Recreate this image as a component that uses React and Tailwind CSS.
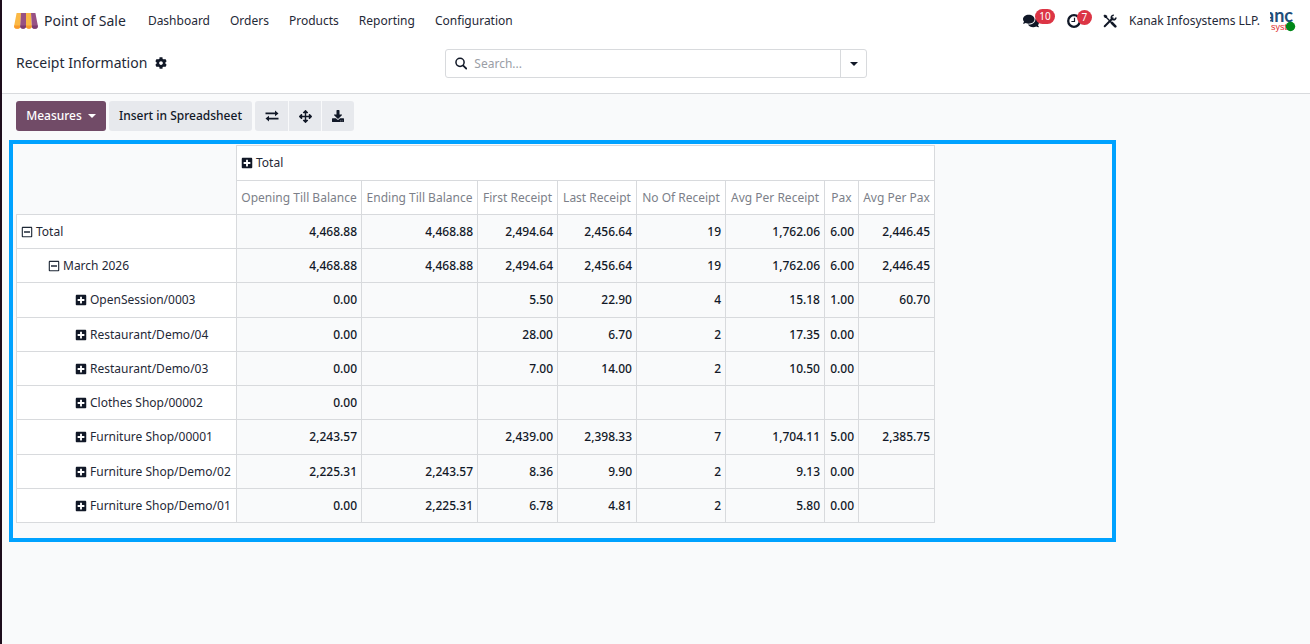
import { FaComments, FaCog, FaPlusSquare, FaRegMinusSquare, FaArrowsAlt, FaDownload } from "react-icons/fa";

const menu = ["Dashboard", "Orders", "Products", "Reporting", "Configuration"];

const columns = [
  { label: "Opening Till Balance", width: "w-[125px]" },
  { label: "Ending Till Balance", width: "w-[116px]" },
  { label: "First Receipt", width: "w-[80px]" },
  { label: "Last Receipt", width: "w-[79px]" },
  { label: "No Of Receipt", width: "w-[89px]" },
  { label: "Avg Per Receipt", width: "w-[99px]" },
  { label: "Pax", width: "w-[34px]" },
  { label: "Avg Per Pax", width: "w-[76px]" },
];

const rows = [
  { label: "Total", level: 0, values: ["4,468.88", "4,468.88", "2,494.64", "2,456.64", "19", "1,762.06", "6.00", "2,446.45"] },
  { label: "March 2026", level: 1, values: ["4,468.88", "4,468.88", "2,494.64", "2,456.64", "19", "1,762.06", "6.00", "2,446.45"] },
  { label: "OpenSession/0003", level: 2, values: ["0.00", "", "5.50", "22.90", "4", "15.18", "1.00", "60.70"] },
  { label: "Restaurant/Demo/04", level: 2, values: ["0.00", "", "28.00", "6.70", "2", "17.35", "0.00", ""] },
  { label: "Restaurant/Demo/03", level: 2, values: ["0.00", "", "7.00", "14.00", "2", "10.50", "0.00", ""] },
  { label: "Clothes Shop/00002", level: 2, values: ["0.00", "", "", "", "", "", "", ""] },
  { label: "Furniture Shop/00001", level: 2, values: ["2,243.57", "", "2,439.00", "2,398.33", "7", "1,704.11", "5.00", "2,385.75"] },
  { label: "Furniture Shop/Demo/02", level: 2, values: ["2,225.31", "2,243.57", "8.36", "9.90", "2", "9.13", "0.00", ""] },
  { label: "Furniture Shop/Demo/01", level: 2, values: ["0.00", "2,225.31", "6.78", "4.81", "2", "5.80", "0.00", ""] },
];

const indents = ["pl-1", "pl-[31px]", "pl-[58px]"];

function AwningLogo() {
  return (
    <svg width="24" height="16" viewBox="0 0 24 16" aria-hidden="true">
      <path d="M2.6 0H7L6.4 13a3.1 2.8 0 0 1-6.3 0z" fill="#fbb945" />
      <path d="M7 0H12v13a2.9 2.8 0 0 1-5.8 0z" fill="#985184" />
      <path d="M12 0h5l.8 13a2.9 2.8 0 0 1-5.8 0z" fill="#fbb945" />
      <path d="M17 0h4.4l2.5 13a3 2.8 0 0 1-6.1 0z" fill="#985184" />
      <path d="M.1 12.6h6.2v.4a3.1 2.8 0 0 1-6.2 0zM12 12.6h5.8v.4a2.9 2.8 0 0 1-5.8 0z" fill="#f99a2c" />
      <path d="M6.2 12.6H12v.4a2.9 2.8 0 0 1-5.8 0zM17.8 12.6h6v.4a3 2.8 0 0 1-6 0z" fill="#7c3c70" />
    </svg>
  );
}

function ClockIcon() {
  return (
    <svg width="14" height="14" viewBox="0 0 14 14" fill="none" stroke="currentColor" aria-hidden="true">
      <circle cx="7" cy="7" r="5.8" strokeWidth="2.3" />
      <path d="M7.5 3.8V7.5H4.4" strokeWidth="1.2" />
    </svg>
  );
}

function ToolsIcon() {
  return (
    <svg width="14" height="14" viewBox="0 0 14 14" fill="none" stroke="currentColor" aria-hidden="true">
      <path d="m2.5 2.5 6 6.2" strokeWidth="1.3" />
      <path d="m9 9 3.3 3.4" strokeWidth="2.6" strokeLinecap="round" />
      <path d="m1.7 12.3 8-8" strokeWidth="2" strokeLinecap="round" />
      <path d="M10.8 1.2A2.3 2.3 0 1 0 12.9 3.5" strokeWidth="1.6" />
      <path d="M.4 1.8 1.8.4l2.4 1.4v1.3l-1 1H1.9z" fill="currentColor" stroke="none" />
    </svg>
  );
}

function SwapIcon() {
  return (
    <svg width="14" height="12" viewBox="0 0 14 12" fill="currentColor" aria-hidden="true">
      <path d="M.5 2.6H10V.6L13.5 3.4 10 6.2V4.2H.5z" />
      <path d="M13.5 7.8H4v-2L.5 8.6 4 11.4v-2h9.5z" />
    </svg>
  );
}

function SearchIcon() {
  return (
    <svg width="13" height="13" viewBox="0 0 13 13" fill="none" stroke="currentColor" aria-hidden="true">
      <circle cx="5.3" cy="5.3" r="4.3" strokeWidth="1.6" />
      <path d="m8.4 8.4 4 4" strokeWidth="1.9" />
    </svg>
  );
}

function Caret() {
  return (
    <svg width="8" height="4" viewBox="0 0 8 4" fill="currentColor" aria-hidden="true">
      <path d="M0 0h8L4 4z" />
    </svg>
  );
}

function Avatar() {
  return (
    <svg width="26" height="24" viewBox="0 0 26 24" role="img" aria-label="Kanak Infosystems">
      <text x="-5" y="13" fontSize="18" fontFamily="Lato, sans-serif" fontWeight="700" fill="#1f4e79">anc</text>
      <text x="1" y="21" fontSize="9" fontFamily="Liberation Sans, sans-serif" fill="#e0312f">syst</text>
      <circle cx="20.5" cy="17.5" r="4.7" fill="#008818" />
    </svg>
  );
}

export default function App() {
  return (
    <div className="min-h-screen border-l-2 border-[#1d0d1c] bg-[#f9fafb] font-['Noto_Sans',sans-serif] text-[12px] text-[#1f2937]">
      <header className="border-b border-[#d8dadd] bg-white">
        <nav className="flex h-[41px] items-center pl-3 pr-[14px]">
          <a href="#home" className="flex items-center gap-[6px] text-sm">
            <AwningLogo />
            Point of Sale
          </a>
          <div className="ml-[22px] flex items-center gap-5">
            {menu.map((item) => (
              <a key={item} href="#menu">{item}</a>
            ))}
          </div>
          <div className="ml-auto flex items-center text-[#111827]">
            <button aria-label="Messages" className="relative mr-7">
              <FaComments size={16} />
              <span className="absolute -top-1 left-3 flex h-[15px] w-5 items-center justify-center rounded-full bg-[#dc3545] text-[10px] text-white">10</span>
            </button>
            <button aria-label="Activities" className="relative mr-[22px]">
              <ClockIcon />
              <span className="absolute -top-1 left-[10px] flex size-[15px] items-center justify-center rounded-full bg-[#dc3545] text-[10px] text-white">7</span>
            </button>
            <button aria-label="Tools" className="mr-3"><ToolsIcon /></button>
            <button className="flex items-center gap-[10px] text-[#1f2937]">
              Kanak Infosystems LLP.
              <Avatar />
            </button>
          </div>
        </nav>
        <div className="grid h-[52px] grid-cols-[1fr_422px_1fr] items-start px-[14px] pt-2">
          <div className="flex h-7 items-center gap-2">
            <h1 className="text-sm">Receipt Information</h1>
            <button aria-label="Actions" className="text-[#111827]"><FaCog size={12} /></button>
          </div>
          <div className="flex h-[29px] rounded-[3px] border border-[#d8dadd]">
            <label className="flex flex-1 items-center gap-[7px] pl-[9px] text-[#111827]">
              <SearchIcon />
              <input type="search" aria-label="Search" placeholder="Search..." className="w-full outline-none placeholder:text-[#9a9ea6]" />
            </label>
            <button aria-label="Toggle filters" className="flex w-[26px] items-center justify-center border-l border-[#d8dadd] text-[#111827]"><Caret /></button>
          </div>
        </div>
      </header>

      <main className="pt-[7px]">
        <div className="flex gap-[3px] pl-[14px] font-medium text-[#111827]">
          <button className="flex h-[30px] w-[90px] items-center justify-center gap-[6px] rounded-[3px] bg-[#714b67] text-white">
            Measures
            <Caret />
          </button>
          <button className="h-[30px] w-[143px] rounded-[3px] bg-[#e7e9ed]">Insert in Spreadsheet</button>
          <div className="flex gap-px">
            <button aria-label="Flip axis" className="flex h-[30px] w-[33px] items-center justify-center rounded-l-[3px] bg-[#e7e9ed]"><SwapIcon /></button>
            <button aria-label="Expand all" className="flex h-[30px] w-8 items-center justify-center bg-[#e7e9ed]"><FaArrowsAlt size={13} /></button>
            <button aria-label="Download" className="flex h-[30px] w-8 items-center justify-center rounded-r-[3px] bg-[#e7e9ed]"><FaDownload size={12} /></button>
          </div>
        </div>

        <section className="ml-[7px] mr-[194px] mt-[9px] border-4 border-[#00a2ff] pb-[15px] pl-[3px] pt-px">
          <table className="w-[919px] table-fixed border-collapse leading-5">
            <colgroup>
              <col className="w-[220px]" />
              {columns.map((c) => (
                <col key={c.label} className={c.width} />
              ))}
            </colgroup>
            <thead>
              <tr className="h-[35px]">
                <td rowSpan={2} />
                <th colSpan={8} className="border border-[#d8dadd] bg-white px-1 text-left font-normal">
                  <button className="flex items-center gap-[3px]">
                    <FaPlusSquare size={12} className="text-[#111827]" />
                    Total
                  </button>
                </th>
              </tr>
              <tr className="h-[34px]">
                {columns.map((c) => (
                  <th key={c.label} className="whitespace-nowrap border border-[#d8dadd] bg-white font-normal text-[#7c7f89]">{c.label}</th>
                ))}
              </tr>
            </thead>
            <tbody>
              {rows.map((row) => (
                <tr key={row.label} className="h-[34px] nth-[4n+3]:h-[35px]">
                  <th className={"whitespace-nowrap border border-[#d8dadd] bg-white text-left font-normal " + indents[row.level]}>
                    <button className="flex items-center gap-[3px]">
                      {row.level < 2 ? <FaRegMinusSquare size={12} /> : <FaPlusSquare size={12} className="text-[#111827]" />}
                      {row.label}
                    </button>
                  </th>
                  {row.values.map((v, i) => (
                    <td key={i} className="border border-[#d8dadd] pr-1 text-right font-medium text-[#111827]">{v}</td>
                  ))}
                </tr>
              ))}
            </tbody>
          </table>
        </section>
      </main>
    </div>
  );
}
